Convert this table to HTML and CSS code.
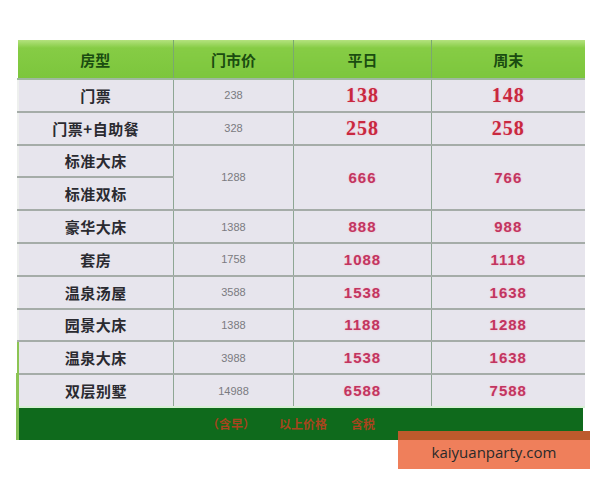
FILE: index.html
```html
<!DOCTYPE html>
<html lang="zh">
<head>
<meta charset="utf-8">
<title>房型价格表</title>
<link rel="stylesheet" href="styles.css">
</head>
<body>
<div class="sheet">
  <table class="prices">
    <colgroup>
      <col class="c1"><col class="c2"><col class="c3"><col class="c4">
    </colgroup>
    <thead>
      <tr><th>房型</th><th>门市价</th><th>平日</th><th>周末</th></tr>
    </thead>
    <tbody>
      <tr><td class="name">门票</td><td class="rack">238</td><td class="price big">138</td><td class="price big">148</td></tr>
      <tr><td class="name">门票+自助餐</td><td class="rack">328</td><td class="price big">258</td><td class="price big">258</td></tr>
      <tr><td class="name">标准大床</td><td class="rack" rowspan="2">1288</td><td class="price" rowspan="2">666</td><td class="price" rowspan="2">766</td></tr>
      <tr><td class="name">标准双标</td></tr>
      <tr><td class="name">豪华大床</td><td class="rack">1388</td><td class="price">888</td><td class="price">988</td></tr>
      <tr><td class="name">套房</td><td class="rack">1758</td><td class="price">1088</td><td class="price">1118</td></tr>
      <tr><td class="name">温泉汤屋</td><td class="rack">3588</td><td class="price">1538</td><td class="price">1638</td></tr>
      <tr><td class="name">园景大床</td><td class="rack">1388</td><td class="price">1188</td><td class="price">1288</td></tr>
      <tr><td class="name">温泉大床</td><td class="rack">3988</td><td class="price">1538</td><td class="price">1638</td></tr>
      <tr class="last"><td class="name">双层别墅</td><td class="rack">14988</td><td class="price">6588</td><td class="price">7588</td></tr>
    </tbody>
  </table>
  <div class="footer"><span>（含早）</span><span>以上价格</span><span>含税</span></div>
</div>
<div class="watermark">kaiyuanparty.com</div>
</body>
</html>
```
FILE: styles.css
```css
html, body {
  margin: 0;
  padding: 0;
  background: #ffffff;
}
body {
  width: 600px;
  height: 480px;
  position: relative;
  overflow: hidden;
  font-family: "Noto Sans CJK SC", "Liberation Sans", sans-serif;
}
.sheet {
  padding: 40px 0 0 16px;
  width: 567px;
}
.prices {
  width: 567px;
  border-collapse: collapse;
  table-layout: fixed;
}
.c1 { width: 156px; }
.c2 { width: 120px; }
.c3 { width: 138px; }
.c4 { width: 153px; }
.prices th {
  height: 38px;
  background: linear-gradient(#b4e27e 0, #86cc45 8px, #7cc63c 100%);
  color: #1a4c10;
  font-family: "Noto Sans CJK SC", "Liberation Serif", serif;
  font-weight: 700;
  font-size: 15px;
  border-left: 1px solid #7aa870;
  border-bottom: 2px solid #9fb8a0;
  padding: 0;
}
.prices th:first-child { border-left: none; }
.prices td {
  height: 30.8px;
  padding: 0;
  text-align: center;
  background: #e7e5ed;
  border-bottom: 2px solid #a5aca8;
  border-left: 1px solid #8ea694;
}
.prices td.name {
  border-left: 2px solid #eef0ee;
  color: #2a2a30;
  font-weight: 700;
  font-size: 15px;
  letter-spacing: 0.5px;
}
.prices td.rack {
  color: #7a7a80;
  font-size: 11px;
  font-family: "Liberation Sans", sans-serif;
}
.prices td.price {
  color: #c23560;
  font-family: "Liberation Sans", sans-serif;
  font-weight: 700;
  font-size: 15px;
  letter-spacing: 1px;
  text-shadow: 0 0 2px #f4b6c8;
}
.prices td.price.big {
  font-family: "Liberation Serif", serif;
  font-size: 20px;
  color: #c8283f;
}
.prices tr.last td {
  border-bottom: 2px solid #d8efd6;
}
.prices tr.last td.name {
  border-left: 3px solid #8cc454;
}
.prices tr:nth-last-child(-n+2) td.name {
  border-left-color: #8cc454;
}
.footer {
  height: 32px;
  background: #0f6a1c;
  border-left: 3px solid #7fbf52;
  display: flex;
  justify-content: center;
  align-items: center;
  gap: 24px;
  padding-right: 20px;
  color: #a8441e;
  font-size: 12px;
  font-weight: 700;
  box-sizing: border-box;
}
.watermark {
  position: absolute;
  left: 398px;
  top: 431px;
  width: 192px;
  height: 38px;
  background: linear-gradient(#bd5a2c 0, #bd5a2c 9px, #ef7f5b 9px);
  color: #2a2a2a;
  font-family: "Open Sans", "Liberation Sans", sans-serif;
  font-size: 15px;
  display: flex;
  justify-content: center;
  align-items: center;
  padding-top: 3px;
  box-sizing: border-box;
}
```
